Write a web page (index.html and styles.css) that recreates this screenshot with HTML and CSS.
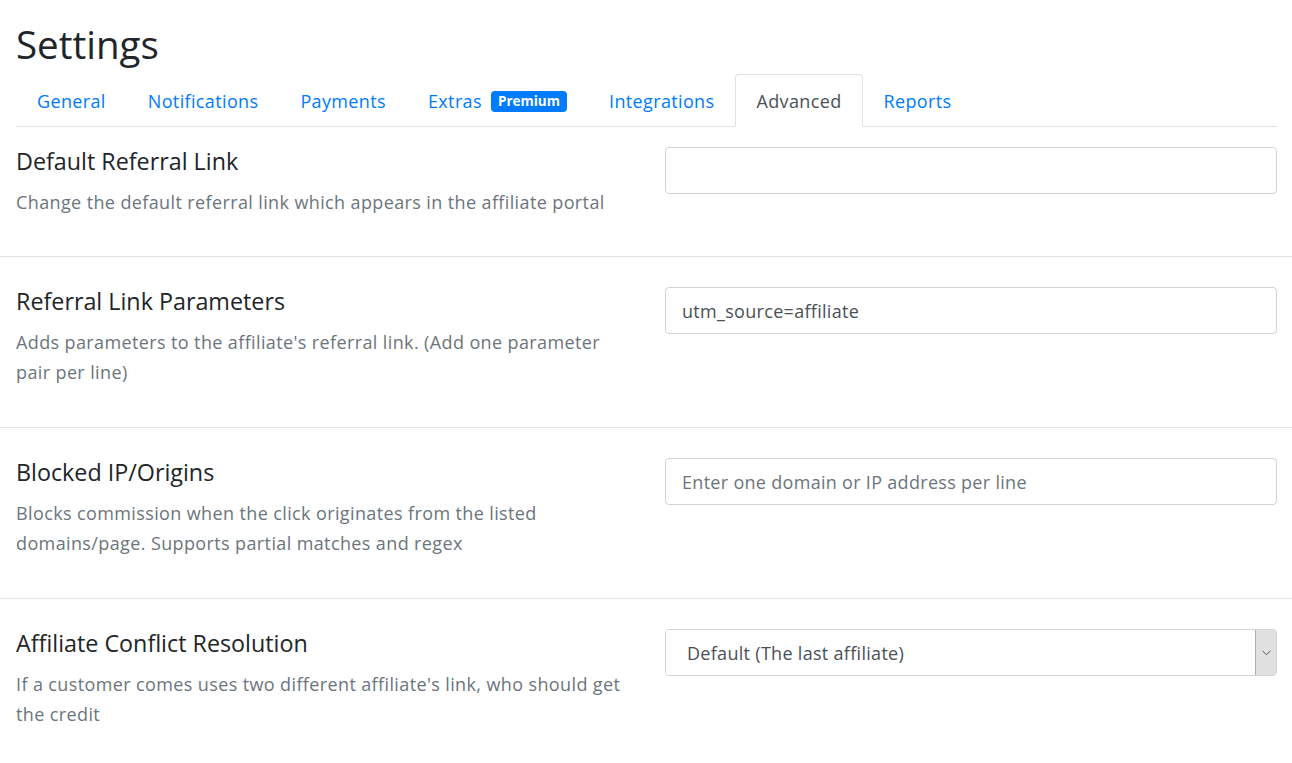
FILE: index.html
```html
<!DOCTYPE html>
<html lang="en">
<head>
<meta charset="utf-8">
<title>Settings</title>
<link rel="stylesheet" href="styles.css">
</head>
<body>
<header class="header">
  <h1 class="page-title">Settings</h1>
  <ul class="tabs">
    <li><a class="tab" href="#">General</a></li>
    <li><a class="tab" href="#">Notifications</a></li>
    <li><a class="tab" href="#">Payments</a></li>
    <li><a class="tab" href="#">Extras <span class="badge">Premium</span></a></li>
    <li><a class="tab" href="#">Integrations</a></li>
    <li><a class="tab active" href="#">Advanced</a></li>
    <li><a class="tab" href="#">Reports</a></li>
  </ul>
</header>
<main>
  <section class="setting first">
    <div class="setting-info">
      <h2 class="setting-title">Default Referral Link</h2>
      <p class="setting-desc">Change the default referral link which appears in the affiliate portal</p>
    </div>
    <div class="setting-control">
      <input class="field" type="text" value="">
    </div>
  </section>
  <section class="setting">
    <div class="setting-info">
      <h2 class="setting-title">Referral Link Parameters</h2>
      <p class="setting-desc">Adds parameters to the affiliate's referral link. (Add one parameter pair per line)</p>
    </div>
    <div class="setting-control">
      <input class="field" type="text" value="utm_source=affiliate">
    </div>
  </section>
  <section class="setting">
    <div class="setting-info">
      <h2 class="setting-title">Blocked IP/Origins</h2>
      <p class="setting-desc">Blocks commission when the click originates from the listed domains/page. Supports partial matches and regex</p>
    </div>
    <div class="setting-control">
      <input class="field" type="text" placeholder="Enter one domain or IP address per line">
    </div>
  </section>
  <section class="setting last">
    <div class="setting-info">
      <h2 class="setting-title">Affiliate Conflict Resolution</h2>
      <p class="setting-desc">If a customer comes uses two different affiliate's link, who should get the credit</p>
    </div>
    <div class="setting-control">
      <div class="select-box">
        <select class="select">
          <option>Default (The last affiliate)</option>
        </select>
        <span class="select-arrow">
          <svg width="9" height="6" viewBox="0 0 9 6"><path d="M0.5 0.8 L4.5 4.8 L8.5 0.8" fill="none" stroke="#555" stroke-width="1"/></svg>
        </span>
      </div>
    </div>
  </section>
</main>
</body>
</html>
```
FILE: styles.css
```css
* { box-sizing: border-box; }
html, body {
  margin: 0;
  padding: 0;
  background: #fff;
  font-family: "Open Sans", "Noto Sans", sans-serif;
  color: #212529;
}
.header {
  padding: 20px 15px 0 16px;
}
.page-title {
  margin: 0 0 6px;
  font-size: 38.5px;
  font-weight: 400;
  line-height: 48px;
  color: #212529;
}
.tabs {
  display: flex;
  list-style: none;
  margin: 0;
  padding: 0;
  border-bottom: 1px solid #dee2e6;
}
.tabs li { margin-bottom: -1px; }
.tab {
  display: flex;
  align-items: center;
  gap: 9px;
  padding: 13px 20px 11px;
  font-size: 18px;
  letter-spacing: 0.36px;
  line-height: 27px;
  color: #007bff;
  text-decoration: none;
  border: 1px solid transparent;
  border-radius: 4px 4px 0 0;
}
.tab.active {
  color: #495057;
  border-color: #dee2e6 #dee2e6 #fff;
  background: #fff;
}
.badge {
  display: inline-block;
  background: #007bff;
  color: #fff;
  font-size: 13.5px;
  letter-spacing: 0;
  font-weight: 700;
  line-height: 21px;
  padding: 0 7px;
  border-radius: 4px;
}
.setting {
  display: grid;
  grid-template-columns: 1fr 612px;
  column-gap: 29px;
  padding: 30px 15px 40px 16px;
  border-bottom: 1px solid #dee2e6;
}
.setting.first { padding-top: 20px; padding-bottom: 39px; }
.setting.last { border-bottom: none; }
.setting-title {
  margin: 0 0 11px;
  font-size: 23.3px;
  font-weight: 400;
  line-height: 29px;
  color: #212529;
}
.setting-desc {
  margin: 0;
  font-size: 18px;
  letter-spacing: 0.38px;
  line-height: 30px;
  color: #6c757d;
}
.field {
  display: block;
  width: 100%;
  height: 47px;
  padding: 0 16px;
  font-family: inherit;
  font-size: 18px;
  letter-spacing: 0.3px;
  color: #495057;
  border: 1px solid #ced4da;
  border-radius: 4px;
  background: #fff;
  outline: none;
}
.field::placeholder { color: #6c757d; opacity: 1; }
.select-box {
  display: flex;
  height: 47px;
  border: 1px solid #ced4da;
  border-radius: 4px;
  overflow: hidden;
  background: #fff;
}
.select {
  flex: 1;
  appearance: none;
  -webkit-appearance: none;
  border: none;
  background: #fff;
  font-family: inherit;
  font-size: 18px;
  letter-spacing: 0.3px;
  color: #495057;
  padding: 0 21px;
  outline: none;
}
.select-arrow {
  width: 21px;
  display: flex;
  align-items: center;
  justify-content: center;
  background: #e1e1e1;
  border-left: 1px solid #adadad;
}
```
